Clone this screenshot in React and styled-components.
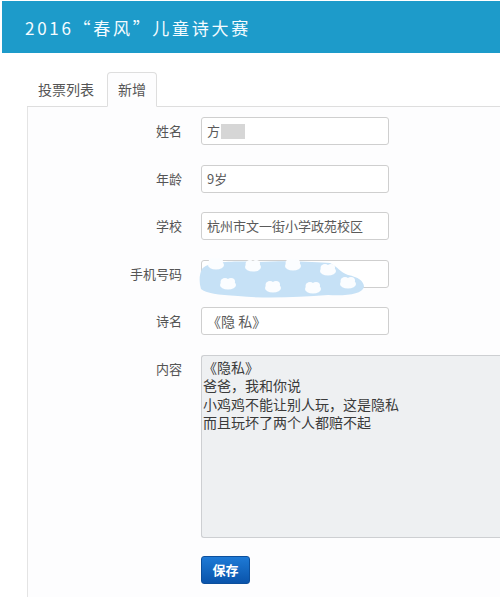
import React from "react";
import styled, { createGlobalStyle } from "styled-components";

const Global = createGlobalStyle`
  html, body { margin: 0; padding: 0; background: #ffffff; overflow: hidden; }
  body { font-family: "Noto Sans CJK SC", "Noto Sans", sans-serif; color: #333; }
  * { box-sizing: border-box; }
`;

const Page = styled.div`
  width: 500px;
  height: 614px;
  overflow: hidden;
  background: #fff;
`;

const Header = styled.header`
  margin: 1px 0 0 2px;
  height: 52px;
  background: #1d9bca;
  display: flex;
  align-items: center;
  padding-left: 23px;
`;

const Title = styled.h1`
  margin: 0;
  font-size: 17px;
  font-weight: 400;
  letter-spacing: 2.7px;
  color: #f4fbff;
  line-height: 1;
`;

const Main = styled.main`
  padding: 19px 0 0 27px;
`;

const TabList = styled.nav`
  display: flex;
  border-bottom: 1px solid #dedede;
  width: 600px;
`;

const Tab = styled.div`
  margin-right: 2px;
  margin-bottom: -1px;
  padding: 6px 10px 7px;
  line-height: 20px;
  font-size: 14px;
  color: #555;
  border: 1px solid ${(p) => (p.$active ? "#dedede" : "transparent")};
  border-bottom-color: ${(p) => (p.$active ? "#fdfdfe" : "transparent")};
  border-radius: 4px 4px 0 0;
  background: ${(p) => (p.$active ? "#fdfdfe" : "transparent")};
`;

const Panel = styled.section`
  border-left: 1px solid #e4e4e4;
  background: #fdfdfe;
  height: 490px;
  width: 600px;
  padding-top: 10px;
`;

const Form = styled.div`
  display: grid;
  grid-template-columns: 154px 1fr;
  column-gap: 19px;
  row-gap: 19.5px;
  align-items: start;
`;

const Label = styled.div`
  text-align: right;
  font-size: 13px;
  line-height: 28px;
  height: 28px;
  color: #555;
`;

const Field = styled.div`
  position: relative;
  width: 188px;
  height: 28px;
  border: 1px solid #cfcfcf;
  border-radius: 3px;
  background: #fff;
  padding-left: 5px;
  font-size: ${(p) => (p.$big ? "14px" : "13px")};
  line-height: 26px;
  color: #5a5a5a;
  display: flex;
  align-items: center;
  white-space: nowrap;
`;

const Blur = styled.span`
  display: inline-block;
  width: 24px;
  height: 15px;
  background: #d6d6d6;
  margin-left: 1px;
`;

const Mask = styled.svg`
  position: absolute;
  left: -4px;
  top: -4px;
`;

const TextArea = styled.div`
  width: 320px;
  height: 183px;
  border: 1px solid #cdcfd2;
  border-right: none;
  border-radius: 3px 0 0 3px;
  background: #eef0f2;
  padding: 2px 0 0 1px;
  font-size: 14px;
  line-height: 18.5px;
  color: #3a3a3a;
  white-space: pre-line;
`;

const ButtonRow = styled.div`
  grid-column: 2;
  margin-top: -1.5px;
`;

const SaveButton = styled.button`
  width: 49px;
  height: 28px;
  border: 1px solid #0c4f9c;
  border-radius: 3px;
  background: linear-gradient(#1e7ad6, #0a54ab);
  color: #fff;
  font-family: inherit;
  font-size: 13px;
  font-weight: 700;
  padding: 0;
  cursor: pointer;
`;

function CloudMask() {
  const dots = [
    [18, 8], [55, 10], [95, 9], [130, 14],
    [30, 28], [75, 31], [115, 32], [150, 27],
  ];
  return (
    <Mask width="170" height="42" viewBox="0 0 170 42">
      <path
        d="M4 12 C10 4 40 4 60 5 C90 3 120 5 132 6 C140 10 142 15 150 18 C160 20 166 24 166 30 C164 37 150 39 130 38 C100 40 70 42 40 39 C20 38 8 36 3 32 C1 25 1 18 4 12 Z"
        fill="#c6e1f6"
      />
      {dots.map(([x, y], i) => (
        <g key={i} fill="#fbfdff">
          <ellipse cx={x} cy={y} rx="8" ry="4.5" />
          <ellipse cx={x - 3} cy={y - 3} rx="4.5" ry="4" />
          <ellipse cx={x + 3} cy={y - 3.5} rx="4" ry="3.5" />
        </g>
      ))}
    </Mask>
  );
}

export default function App() {
  return (
    <Page>
      <Global />
      <Header>
        <Title>2016“春风”儿童诗大赛</Title>
      </Header>
      <Main>
        <TabList>
          <Tab>投票列表</Tab>
          <Tab $active>新增</Tab>
        </TabList>
        <Panel>
          <Form>
            <Label>姓名</Label>
            <Field>
              方<Blur />
            </Field>
            <Label>年龄</Label>
            <Field>9岁</Field>
            <Label>学校</Label>
            <Field>杭州市文一街小学政苑校区</Field>
            <Label>手机号码</Label>
            <Field>
              <CloudMask />
            </Field>
            <Label>诗名</Label>
            <Field $big>《隐 私》</Field>
            <Label>内容</Label>
            <TextArea>
              {"《隐私》\n爸爸，我和你说\n小鸡鸡不能让别人玩，这是隐私\n而且玩坏了两个人都赔不起"}
            </TextArea>
            <ButtonRow>
              <SaveButton>保存</SaveButton>
            </ButtonRow>
          </Form>
        </Panel>
      </Main>
    </Page>
  );
}
